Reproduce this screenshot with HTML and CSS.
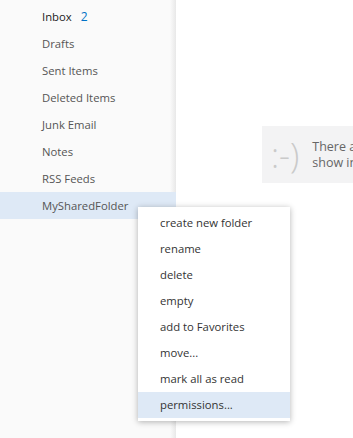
FILE: index.html
```html
<!DOCTYPE html>
<html lang="en">
<head>
  <meta charset="UTF-8" />
  <title>Mail folders</title>
  <link rel="stylesheet" href="styles.css">
</head>
<body>
  <div class="app">
    <!-- Folder pane -->
    <div class="folders">
      <ul class="folder-list">
        <li class="folder unread">Inbox <span class="count">2</span></li>
        <li class="folder">Drafts</li>
        <li class="folder">Sent Items</li>
        <li class="folder">Deleted Items</li>
        <li class="folder">Junk Email</li>
        <li class="folder">Notes</li>
        <li class="folder">RSS Feeds</li>
        <li class="folder selected">MySharedFolder</li>
      </ul>
    </div>
    <div class="divider"></div>

    <!-- Reading pane -->
    <div class="main">
      <div class="empty">
        <span class="smiley">:-)</span>
        <span class="empty-text">There are no items to<br>show in this view.</span>
      </div>
    </div>
  </div>

  <!-- Context menu -->
  <ul class="context-menu">
    <li>create new folder</li>
    <li>rename</li>
    <li>delete</li>
    <li>empty</li>
    <li>add to Favorites</li>
    <li>move...</li>
    <li>mark all as read</li>
    <li class="active">permissions...</li>
  </ul>
</body>
</html>
```

FILE: styles.css
```css
* { margin: 0; padding: 0; box-sizing: border-box; }
body {
  font-family: 'Open Sans', 'Noto Sans', sans-serif;
  font-size: 11.3px;
  color: #444;
  background: #fff;
  overflow: hidden;
}
ul { list-style: none; }

.app { display: flex; height: 438px; }

.folders {
  width: 170px;
  background: #fafafa;
  padding-top: 3px;
}
.divider {
  width: 6px;
  background: linear-gradient(to right, #fafafa, #e8e8e8);
}
.folder {
  height: 27px;
  line-height: 27px;
  padding-left: 42px;
  color: #555;
  white-space: nowrap;
}
.folder.unread { color: #222; }
.folder .count { color: #0072c6; margin-left: 6px; font-size: 12px; }
.folder.selected {
  position: relative;
  z-index: 1;
  background: #dee9f6;
  margin-right: -6px;
}

.main { flex: 1; overflow: hidden; }
.empty {
  display: flex;
  align-items: center;
  gap: 13px;
  margin: 126px 0 0 86px;
  height: 57px;
  width: 260px;
  padding-left: 9px;
  background: #f3f3f4;
  white-space: nowrap;
}
.smiley {
  font-size: 34px;
  font-weight: 300;
  color: #cacaca;
  line-height: 1;
}
.empty-text {
  color: #666;
  font-size: 12.5px;
  line-height: 16px;
}

.context-menu {
  position: absolute;
  z-index: 2;
  left: 138px;
  top: 207px;
  width: 152px;
  padding: 3px 0 3px;
  background: #fff;
  box-shadow: 0 1px 6px rgba(0, 0, 0, 0.3);
}
.context-menu li {
  height: 26px;
  line-height: 26px;
  padding-left: 22px;
  color: #333;
  white-space: nowrap;
}
.context-menu li.active { background: #dee9f6; }
```
